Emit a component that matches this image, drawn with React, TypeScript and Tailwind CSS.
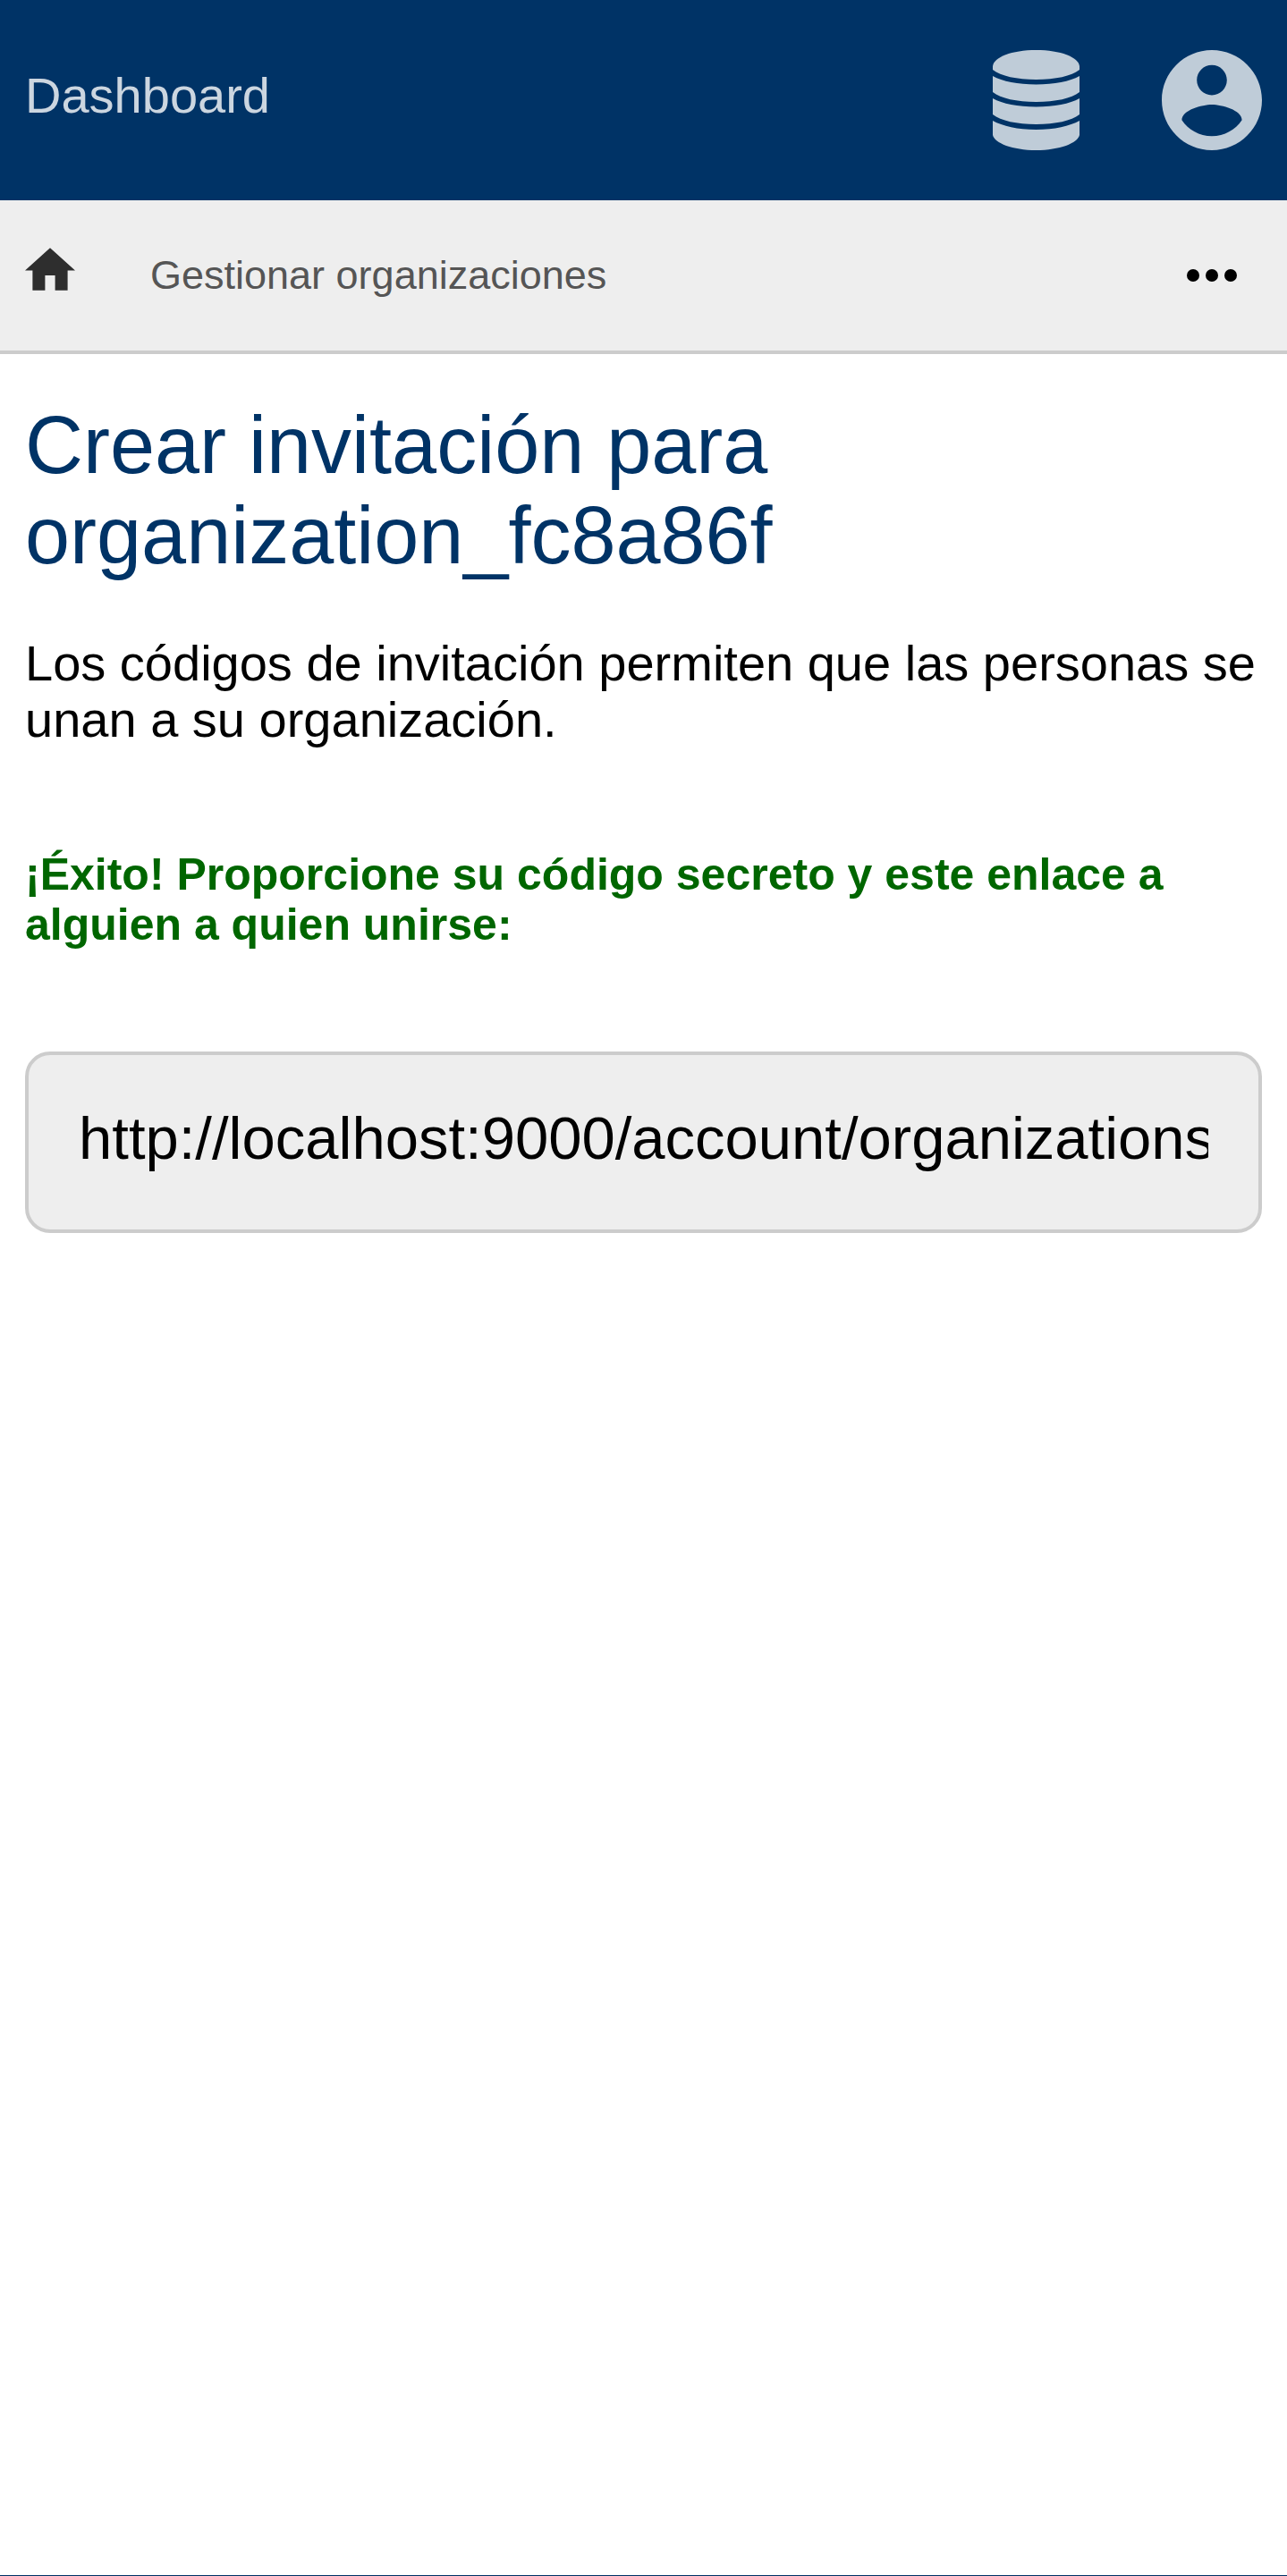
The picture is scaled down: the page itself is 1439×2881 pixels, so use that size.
function HomeIcon() {
  return (
    <svg viewBox="2 3 20 17" className="h-12 w-14" fill="currentColor" aria-hidden="true">
      <path d="M10 20v-6h4v6h5v-8h3L12 3 2 12h3v8z" />
    </svg>
  );
}

function DatabaseIcon() {
  return (
    <svg viewBox="0 0 97 112" className="h-28 w-[97px]" fill="currentColor" aria-hidden="true">
      <path d="M0 18C1 8 21 0 48.500 0S96 8 97 18V22C88 29 70 33 48.500 33S9 29 0 22Z" />
      <path d="M0 29C11 35 28 38.500 48.500 38.500S86 35 97 29V47C88 54 70 58 48.500 58S9 54 0 47Z" />
      <path d="M0 54C11 60 28 63.500 48.500 63.500S86 60 97 54V72C88 79 70 83 48.500 83S9 79 0 72Z" />
      <path d="M0 79C11 85 28 89 48.500 89S86 85 97 79V95C95 104 75 112 48.500 112S2 104 0 95Z" />
    </svg>
  );
}

function AccountIcon() {
  return (
    <svg viewBox="2 2 20 20" className="size-28" fill="currentColor" aria-hidden="true">
      <path d="M12 2C6.480 2 2 6.480 2 12s4.480 10 10 10 10-4.480 10-10S17.520 2 12 2zm0 3c1.660 0 3 1.340 3 3s-1.340 3-3 3-3-1.340-3-3 1.340-3 3-3zm0 14.200c-2.500 0-4.710-1.280-6-3.220.030-1.990 4-3.080 6-3.080 1.990 0 5.970 1.090 6 3.080-1.290 1.940-3.500 3.220-6 3.220z" />
    </svg>
  );
}

function MoreIcon() {
  return (
    <svg viewBox="0 0 56 14" className="h-3.5 w-14" fill="currentColor" aria-hidden="true">
      <circle cx="7" cy="7" r="7" />
      <circle cx="28" cy="7" r="7" />
      <circle cx="49" cy="7" r="7" />
    </svg>
  );
}

export default function App() {
  return (
    <div className="flex min-h-screen flex-col bg-white font-['Liberation_Sans',Arial,sans-serif] text-[56px] leading-[63px] text-black">
      <header className="flex h-56 items-center justify-between bg-[#003366] px-7">
        <a href="#dashboard" className="pb-3 text-[#ccd6e0]">
          Dashboard
        </a>
        <div className="flex items-center gap-[92px] text-[#bfccd8]">
          <button type="button" aria-label="Datos">
            <DatabaseIcon />
          </button>
          <button type="button" aria-label="Cuenta">
            <AccountIcon />
          </button>
        </div>
      </header>

      <nav className="flex h-[172px] items-center justify-between border-b-4 border-[#cccccc] bg-[#eeeeee] px-7">
        <div className="flex items-center gap-21">
          <a href="#home" aria-label="Inicio" className="pb-3.5 text-[#2e2e2e]">
            <HomeIcon />
          </a>
          <a href="#organizaciones" className="pb-0.5 text-[45px] text-[#555555]">
            Gestionar organizaciones
          </a>
        </div>
        <button type="button" aria-label="Más opciones" className="px-7">
          <MoreIcon />
        </button>
      </nav>

      <main className="flex-1 px-7 pt-[52px]">
        <h1 className="text-[90px] leading-[101px] text-[#003366]">
          Crear invitación para organization_fc8a86f
        </h1>
        <p className="mt-15">
          Los códigos de invitación permiten que las personas se unan a su organización.
        </p>
        <p className="mt-[114px] text-[50px] leading-14 font-bold text-[#006600]" id="invite-label">
          ¡Éxito! Proporcione su código secreto y este enlace a alguien a quien unirse:
        </p>
        <div className="mt-[114px] rounded-[28px] border-4 border-[#cccccc] bg-[#eeeeee] px-14 pt-[54px] pb-16">
          <input
            type="text"
            readOnly
            aria-labelledby="invite-label"
            defaultValue="http://localhost:9000/account/organizations/"
            className="block h-[77px] w-full bg-transparent text-[67px] outline-none"
          />
        </div>
      </main>

      <footer className="h-px bg-[#003366]" />
    </div>
  );
}
